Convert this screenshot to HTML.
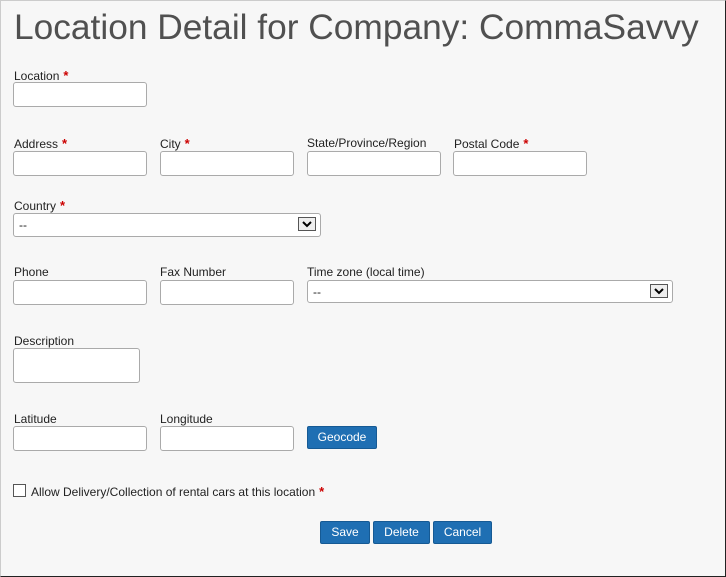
<!DOCTYPE html>
<html><head><style>
html,body{margin:0;padding:0}
body{width:726px;height:577px;position:relative;background:#f7f7f7;font-family:"Liberation Sans",Arial,sans-serif;overflow:hidden}
.frame{position:absolute;left:0;top:0;width:724px;height:575px;border:1px solid #222;border-left-color:#ccc;border-top-color:#ccc}
h1{position:absolute;left:14px;top:8px;margin:0;font-weight:300;font-size:35.3px;color:#505050;white-space:nowrap;letter-spacing:0}
.l{position:absolute;font-size:12px;color:#222;white-space:nowrap}
.l b{color:#c00;font-weight:bold;margin-left:4px;font-size:13px}
.i{position:absolute;background:#fff;border:1px solid #aaa;border-radius:3px;box-sizing:border-box}
.s{position:absolute;background:#fff;border:1px solid #aaa;border-radius:3px;box-sizing:border-box;font-size:12px;padding:4px 0 0 5px;color:#222}
.s i{position:absolute;right:4px;top:3px;width:18px;height:14px;border:1px solid #555;background:#eee;box-sizing:border-box}
.s i svg{position:absolute;left:3px;top:2px}
.b{position:absolute;background:#1f6fb3;border:1px solid #165a94;border-radius:2px;color:#fff;font-size:12px;text-align:center;line-height:21px;box-sizing:border-box;height:23px}
.cb{position:absolute;left:13px;top:484px;width:13px;height:13px;border:1px solid #555;background:#fff;box-sizing:border-box}
</style></head><body>
<div class="frame"></div>
<h1>Location Detail for Company: CommaSavvy</h1>
<div class="l" style="left:14px;top:68px">Location<b>*</b></div>
<div class="i" style="left:13px;top:82px;width:134px;height:25px"></div>

<div class="l" style="left:14px;top:136px">Address<b>*</b></div>
<div class="l" style="left:160px;top:136px">City<b>*</b></div>
<div class="l" style="left:307px;top:136px">State/Province/Region</div>
<div class="l" style="left:454px;top:136px">Postal Code<b>*</b></div>
<div class="i" style="left:13px;top:151px;width:134px;height:25px"></div>
<div class="i" style="left:160px;top:151px;width:134px;height:25px"></div>
<div class="i" style="left:307px;top:151px;width:134px;height:25px"></div>
<div class="i" style="left:453px;top:151px;width:134px;height:25px"></div>

<div class="l" style="left:14px;top:198px">Country<b>*</b></div>
<div class="s" style="left:13px;top:213px;width:308px;height:24px">--<i><svg width="10" height="8" viewBox="0 0 10 8"><path d="M1 2 L5 6 L9 2" stroke="#000" stroke-width="2" fill="none"/></svg></i></div>

<div class="l" style="left:14px;top:265px">Phone</div>
<div class="l" style="left:160px;top:265px">Fax Number</div>
<div class="l" style="left:307px;top:265px">Time zone (local time)</div>
<div class="i" style="left:13px;top:280px;width:134px;height:25px"></div>
<div class="i" style="left:160px;top:280px;width:134px;height:25px"></div>
<div class="s" style="left:307px;top:280px;width:366px;height:23px">--<i><svg width="10" height="8" viewBox="0 0 10 8"><path d="M1 2 L5 6 L9 2" stroke="#000" stroke-width="2" fill="none"/></svg></i></div>

<div class="l" style="left:14px;top:334px">Description</div>
<div class="i" style="left:13px;top:348px;width:127px;height:35px"></div>

<div class="l" style="left:14px;top:412px">Latitude</div>
<div class="l" style="left:160px;top:412px">Longitude</div>
<div class="i" style="left:13px;top:426px;width:134px;height:25px"></div>
<div class="i" style="left:160px;top:426px;width:134px;height:25px"></div>
<div class="b" style="left:307px;top:426px;width:70px">Geocode</div>

<div class="cb"></div>
<div class="l" style="left:31px;top:484px">Allow Delivery/Collection of rental cars at this location<b>*</b></div>

<div class="b" style="left:320px;top:521px;width:50px">Save</div>
<div class="b" style="left:373px;top:521px;width:57px">Delete</div>
<div class="b" style="left:433px;top:521px;width:59px">Cancel</div>
</body></html>
